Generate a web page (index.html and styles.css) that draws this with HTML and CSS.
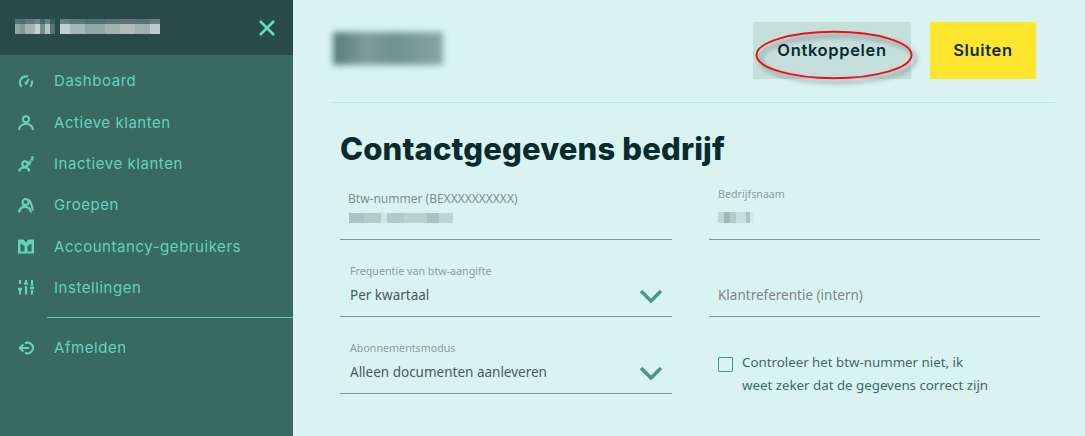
FILE: index.html
```html
<!DOCTYPE html>
<html lang="nl">
<head>
    <meta charset="UTF-8">
    <meta name="viewport" content="width=device-width, initial-scale=1.0">
    <title>Contactgegevens bedrijf</title>
    <link rel="stylesheet" href="styles.css">
</head>
<body>
    <aside class="sidebar">
        <div class="side-head">
            <div class="side-title">
                <span class="mosaic mosaic-a"></span>
                <span class="mosaic mosaic-b"></span>
            </div>
            <svg class="close" viewBox="0 0 16 16"><path d="M1 1l14 14M15 1L1 15"/></svg>
        </div>
        <nav class="side-nav">
            <a class="nav-item" href="#">
                <svg class="nav-icon" viewBox="0 0 16 16"><path d="M3.800 13.800A6 6 0 0 1 10 3.840M12.200 13.800A6 6 0 0 0 13.700 7.600M8 10.500L11 6"/><circle class="dot" cx="8" cy="10.500" r="1.400"/></svg>
                Dashboard
            </a>
            <a class="nav-item" href="#">
                <svg class="nav-icon" viewBox="0 0 16 16"><circle cx="8" cy="5.300" r="3.100"/><path d="M1 16c.5-4 3.500-6 7-6s6.500 2 7 6"/></svg>
                Actieve klanten
            </a>
            <a class="nav-item" href="#">
                <svg class="nav-icon" viewBox="0 0 16 16"><circle cx="7" cy="8" r="2.700"/><path d="M1 15.500c.5-2.500 2.800-4 5.500-4 1.800 0 3.200.6 4.200 1.700M11 15.500V13"/><path class="thin" d="M10.300 6h2.300l-2.300 2.400h2.300M13 1.200h2.400L13 3.800h2.400"/></svg>
                Inactieve klanten
            </a>
            <a class="nav-item" href="#">
                <svg class="nav-icon" viewBox="0 0 16 16"><circle cx="7.600" cy="5" r="3"/><path d="M1 15.500c.5-3.600 3-5.600 6-5.600 3.400 0 5.600 2 6 5.600M10.500 2.500c2 2 3.500 6 4.500 11M4.500 10l2.500-3"/></svg>
                Groepen
            </a>
            <a class="nav-item" href="#">
                <svg class="nav-icon nav-solid" viewBox="0 0 16 16"><path fill-rule="evenodd" d="M0 1.500h16v14H0zM2.500 5.500l4 2.500v5.500h-4zM13.500 5.500l-4 2.500v5.500h4zM5.500 1.500h5L8 4.500z"/></svg>
                Accountancy-gebruikers
            </a>
            <a class="nav-item" href="#">
                <svg class="nav-icon" viewBox="0 0 16 16"><path d="M2 1v4M2 9v6.500M8 1v2M8 7v8.500M14 1v6M14 11v4.500"/><path class="knob" d="M0 10h4M6 4.500h4M12 9h4"/></svg>
                Instellingen
            </a>
            <div class="nav-sep"></div>
            <a class="nav-item" href="#">
                <svg class="nav-icon" viewBox="0 0 16 16"><path d="M11 8H2M5.300 4.500L1.800 8l3.500 3.500M7 3.300A5.500 5.500 0 0 1 15 8a5.500 5.500 0 0 1-8 4.700"/></svg>
                Afmelden
            </a>
        </nav>
    </aside>

    <main class="content">
        <header class="top-bar">
            <div class="blur-logo"></div>
            <div class="actions">
                <button class="btn btn-muted" type="button">Ontkoppelen</button>
                <button class="btn btn-yellow" type="button">Sluiten</button>
            </div>
        </header>

        <section class="form-area">
            <h1>Contactgegevens bedrijf</h1>
            <div class="form-grid">
                <div class="field">
                    <span class="field-label label-vat">Btw-nummer (BEXXXXXXXXXX)</span>
                    <span class="mosaic mosaic-vat"></span>
                </div>
                <div class="field">
                    <span class="field-label label-name">Bedrijfsnaam</span>
                    <span class="mosaic mosaic-name"></span>
                </div>
                <div class="field">
                    <span class="field-label">Frequentie van btw-aangifte</span>
                    <span class="field-value">Per kwartaal</span>
                    <svg class="chevron" viewBox="0 0 24 15"><path d="M2 2l10 10L22 2"/></svg>
                </div>
                <div class="field">
                    <span class="placeholder">Klantreferentie (intern)</span>
                </div>
                <div class="field">
                    <span class="field-label">Abonnementsmodus</span>
                    <span class="field-value">Alleen documenten aanleveren</span>
                    <svg class="chevron" viewBox="0 0 24 15"><path d="M2 2l10 10L22 2"/></svg>
                </div>
                <label class="check-row">
                    <span class="check-box"></span>
                    <span class="check-text">Controleer het btw-nummer niet, ik<br>weet zeker dat de gegevens correct zijn</span>
                </label>
            </div>
        </section>
    </main>

    <svg class="annotation" viewBox="0 0 172 60">
        <defs>
            <filter id="drop" x="-10%" y="-20%" width="125%" height="150%">
                <feDropShadow dx="4" dy="4" stdDeviation="2.500" flood-color="#000" flood-opacity="0.45"/>
            </filter>
        </defs>
        <ellipse cx="79" cy="26" rx="77.500" ry="23.200" filter="url(#drop)"/>
    </svg>
</body>
</html>
```

FILE: styles.css
```css
* {
    box-sizing: border-box;
}
body {
    margin: 0;
    height: 436px;
    overflow: hidden;
    display: flex;
    background-color: #d9f4f0;
    font-family: "Noto Sans", Arial, sans-serif;
    color: #3f5f5c;
}
.sidebar {
    width: 293px;
    flex: none;
    background-color: #386a62;
}
.side-head {
    height: 55px;
    padding: 0 18px 0 15px;
    display: flex;
    align-items: center;
    justify-content: space-between;
    background-color: #284b49;
}
.side-title {
    display: flex;
    gap: 5px;
    margin-top: -3px;
}
.close {
    width: 16px;
    height: 16px;
    fill: none;
    stroke: #63d8c2;
    stroke-width: 2.600;
}
.side-nav {
    padding-top: 5.300px;
}
.nav-item {
    height: 41.300px;
    padding-left: 18px;
    display: flex;
    align-items: center;
    gap: 20px;
    color: #63d3be;
    font-family: Inter, Arial, sans-serif;
    font-size: 15px;
    letter-spacing: 0.550px;
    text-decoration: none;
}
.nav-icon {
    width: 16px;
    height: 16px;
    flex: none;
    fill: none;
    stroke: #63d3be;
    stroke-width: 2.100;
}
.nav-icon .thin {
    stroke-width: 1.500;
}
.nav-icon .knob {
    stroke-width: 2.400;
}
.nav-icon .dot {
    fill: #63d3be;
    stroke: none;
}
.nav-solid {
    fill: #63d3be;
    stroke: none;
}
.nav-sep {
    height: 1px;
    margin: 9px 0 9px 47px;
    background-color: #63c9b5;
}
.mosaic {
    display: block;
}
.mosaic-a {
    width: 40px;
    height: 15px;
    background:
        linear-gradient(180deg, rgba(40, 75, 73, 0.55) 0 5px, rgba(40, 75, 73, 0) 5px),
        linear-gradient(90deg, #8fa9a5 0 5px, #7d9a98 5px 10px, #a5b3ae 10px 20px, #c6d2cf 20px 25px, #6f8f8c 25px 30px, #b8c5c2 30px 35px, #59756f 35px 40px);
}
.mosaic-b {
    width: 100px;
    height: 15px;
    background:
        linear-gradient(180deg, rgba(40, 75, 73, 0.6) 0 5px, rgba(40, 75, 73, 0) 5px),
        linear-gradient(90deg, #c2d2d2 0 10px, #a5bab6 10px 25px, #8fa8a5 25px 45px, #a3b4ae 45px 60px, #b2bcb9 60px 75px, #9fb1b1 75px 90px, #c0cccb 90px 100px);
}
.mosaic-vat {
    width: 104px;
    height: 10px;
    margin-top: 7px;
    margin-left: 9px;
    background: linear-gradient(90deg, #a9c4c2 0 15px, #b4cdc9 15px 32px, #d0e4e0 32px 38px, #aecbc8 38px 55px, #b9d2ce 55px 78px, #a8c4c0 78px 90px, #bdd4d0 90px 104px);
}
.mosaic-name {
    width: 36px;
    height: 11px;
    margin-top: 11px;
    margin-left: 9px;
    background: linear-gradient(90deg, #c0d8d4 0 6px, #9cb9b5 6px 12px, #b1cbc7 12px 18px, #c7dedc 18px 28px, #a9c3bf 28px 32px, #cdeaee 32px 36px);
}
.content {
    flex: 1;
    padding: 0 30px 0 38px;
}
.top-bar {
    height: 103px;
    padding: 22px 19px 0 2px;
    display: flex;
    justify-content: space-between;
    align-items: flex-start;
    border-bottom: 1px solid #b5ebdf;
}
.blur-logo {
    width: 110px;
    height: 33px;
    margin-top: 10px;
    background: linear-gradient(90deg, #557c7a, #7d9d9a 30%, #6f9391 55%, #86a5a2);
    filter: blur(3px);
}
.actions {
    display: flex;
    gap: 19px;
}
.btn {
    height: 57px;
    padding: 0 0 2px;
    border: 0;
    border-radius: 0;
    font-family: Inter, Arial, sans-serif;
    font-size: 16.500px;
    font-weight: 600;
    letter-spacing: 0.650px;
    color: #0c2c2e;
}
.btn-muted {
    width: 158px;
    background-color: #c5dfda;
}
.btn-yellow {
    width: 106px;
    background-color: #ffe62e;
}
.form-area {
    padding: 0 15px 0 9px;
}
h1 {
    margin: 26px 0 0;
    height: 40px;
    font-family: Inter, Arial, sans-serif;
    font-size: 31px;
    line-height: 40px;
    font-weight: 800;
    letter-spacing: 0.150px;
    color: #082b2e;
}
.form-grid {
    margin-top: 15px;
    display: grid;
    grid-template-columns: 332px 331px;
    grid-auto-rows: 56px;
    column-gap: 37px;
    row-gap: 21px;
}
.field {
    position: relative;
    border-bottom: 1px solid #7c9490;
}
.field-label {
    display: block;
    padding: 3px 0 0 10px;
    font-size: 10.700px;
    line-height: 14px;
    color: #8b9e9b;
}
.label-vat {
    padding: 8px 0 0 8px;
    font-size: 12px;
    color: #7d8f8c;
}
.label-name {
    padding-left: 9px;
}
.field-value {
    display: block;
    padding: 7px 0 0 10px;
    font-size: 13.500px;
    line-height: 20px;
}
.placeholder {
    display: block;
    padding: 24px 0 0 9px;
    font-size: 13.500px;
    line-height: 20px;
    color: #7d8684;
}
.chevron {
    position: absolute;
    right: 9px;
    top: 28px;
    width: 24px;
    height: 15px;
    fill: none;
    stroke: #4b978e;
    stroke-width: 3.600;
}
.check-row {
    padding: 13px 0 0 9px;
    display: flex;
    gap: 9px;
    font-size: 13.300px;
    line-height: 23px;
    color: #3f6965;
}
.check-box {
    width: 15px;
    height: 15px;
    margin-top: 6px;
    flex: none;
    border: 1px solid #4b978e;
    border-radius: 1px;
}
.annotation {
    position: absolute;
    left: 755px;
    top: 29px;
    width: 172px;
    height: 60px;
    fill: none;
    stroke: #f0101a;
    stroke-width: 2;
}
```
